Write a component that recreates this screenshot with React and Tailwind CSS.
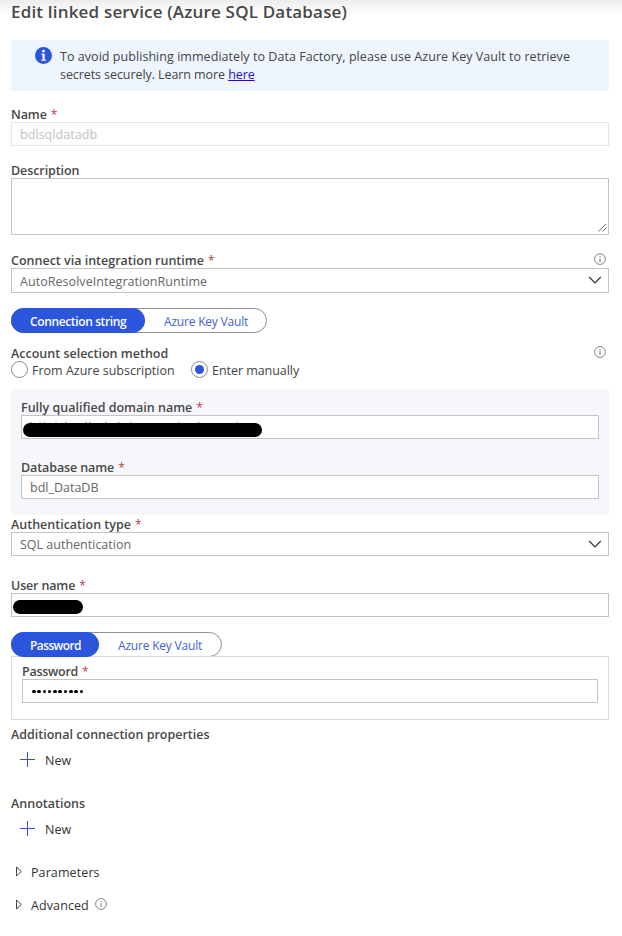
function InfoCircle({ className = "" }) {
  return (
    <svg viewBox="0 0 12 12" className={`size-3 shrink-0 ${className}`} fill="none" stroke="#666">
      <circle cx="6" cy="6" r="5.4" strokeWidth="0.8" />
      <path d="M6 5v4M6 3v1" strokeWidth="0.9" />
    </svg>
  );
}

function Chevron() {
  return (
    <svg viewBox="0 0 14 8" className="mb-[3px] h-2 w-3.5 shrink-0" fill="none" stroke="#333" strokeWidth="1.2">
      <path d="M1.2 1 7 6.8 12.8 1" />
    </svg>
  );
}

function Label({ children, required, info, className = "" }) {
  return (
    <div className="flex h-[17px] items-end justify-between">
      <div className="flex whitespace-nowrap text-[12.5px] leading-[15px] font-semibold text-[#484848]">
        <span className={className}>{children}</span>
        {required && <span className="ml-1 text-[12px] font-normal text-[#b5434b]">*</span>}
      </div>
      {info && <InfoCircle className="mr-[3px] mb-[3px]" />}
    </div>
  );
}

function Field({ children, className = "h-6 border-[#c4c4c6] text-[#666]" }) {
  return (
    <div className={`flex items-center border bg-white pt-0.5 pl-2 text-[12.5px] whitespace-nowrap ${className}`}>
      {children}
    </div>
  );
}

function Pills({ active, activeClass, widthClass }) {
  return (
    <div className={`flex h-[25px] rounded-full border border-[#8f8f98] text-[12px] leading-[23px] whitespace-nowrap ${widthClass}`}>
      <div className={`-my-px -ml-px h-[25px] rounded-full bg-[#2a55dc] pl-[19px] font-semibold text-white ${activeClass}`}>
        {active}
      </div>
      <div className="pl-[19px] leading-[25px] tracking-[-0.2px] text-[#3f62d8]">Azure Key Vault</div>
    </div>
  );
}

function AddNew() {
  return (
    <div className="flex h-[17px] items-center pl-[9px]">
      <svg viewBox="0 0 15 15" className="mb-0.5 size-[15px]" fill="none" stroke="#3555c5">
        <path d="M7.5 0v15M0 7.5h15" />
      </svg>
      <span className="ml-2.5 text-[12.5px] leading-[17px] text-[#333]">New</span>
    </div>
  );
}

function Expander({ children, info }) {
  return (
    <div className="flex h-[17px] items-center pl-[5px] text-[12.5px] leading-[17px] font-medium text-[#333]">
      <svg viewBox="0 0 6 11" className="mb-0.5 h-[11px] w-1.5" fill="none" stroke="#444">
        <path d="M.5 1v9L5.3 5.5Z" />
      </svg>
      <span className="ml-[9px] tracking-[0.1px]">{children}</span>
      {info && <InfoCircle className="-mt-1 ml-1.5" />}
    </div>
  );
}

export default function App() {
  return (
    <div className="h-[936px] w-[622px] overflow-hidden bg-linear-to-b from-[#ececec] to-white to-[14px] pr-[13px] pl-[11px] font-['Open_Sans','Noto_Sans',sans-serif]">
      <h1 className="h-10 text-[17px] leading-6 font-semibold tracking-[0.18px] whitespace-nowrap text-[#484848]">
        Edit linked service (Azure SQL Database)
      </h1>

      <div className="flex h-[51px] bg-[#eef5ff] pt-[7px] pl-6">
        <svg viewBox="0 0 17 17" className="size-[17px] shrink-0">
          <circle cx="8.5" cy="8.5" r="8.5" fill="#2a55dc" />
          <circle cx="8.5" cy="4.2" r="1.4" fill="#fff" />
          <path d="M6.5 6.8h3.2v5.9h1.3v1.1H6.2v-1.1h1.3V8h-1Z" fill="#fff" />
        </svg>
        <p className="mt-px ml-2 text-[12.5px] leading-[18px] whitespace-nowrap text-[#444]">
          <span className="tracking-[0.05px]">
            To avoid publishing immediately to Data Factory, please use Azure Key Vault to retrieve
          </span>
          <br />
          <span className="tracking-[-0.08px]">
            secrets securely. Learn more <a className="text-[#2a0dcb] underline">here</a>
          </span>
        </p>
      </div>

      <div className="mt-3.5">
        <Label required className="tracking-[-0.1px]">Name</Label>
        <Field className="h-6 border-[#e6e6e6] text-[#c2c2c2]">
          <span className="tracking-[0.05px]">bdlsqldatadb</span>
        </Field>
      </div>

      <div className="mt-[15px]">
        <Label className="tracking-[-0.08px]">Description</Label>
        <div className="flex h-[57px] items-end justify-end border border-[#c4c4c6] bg-white p-px">
          <svg viewBox="0 0 9 9" className="mb-px size-[9px]" stroke="#555" strokeWidth="0.9">
            <path d="M.5 8.5 8 1M4.5 8.5 8.3 4.7" />
          </svg>
        </div>
      </div>

      <div className="mt-4">
        <Label required info>Connect via integration runtime</Label>
        <Field className="h-[25px] justify-between border-[#c4c4c6] pr-1.5 text-[#666]">
          <span className="pt-px tracking-[0.05px]">AutoResolveIntegrationRuntime</span>
          <Chevron />
        </Field>
      </div>

      <div className="mt-[15px]">
        <Pills active="Connection string" activeClass="w-[134px] leading-[27px] tracking-[-0.37px]" widthClass="w-64" />
      </div>

      <div className="mt-[11px]">
        <Label info>Account selection method</Label>
      </div>
      <div className="flex h-[17px] items-center text-[12.5px] leading-[15px] whitespace-nowrap text-[#444]">
        <span className="size-[17px] rounded-full border border-[#888] bg-white" />
        <span className="mt-px ml-1 w-[142px]">From Azure subscription</span>
        <span className="ml-[17px] flex size-[17px] items-center justify-center rounded-full border border-[#888] bg-white">
          <span className="size-[9px] rounded-full bg-[#2a55dc]" />
        </span>
        <span className="mt-px ml-1 tracking-[-0.05px]">Enter manually</span>
      </div>

      <div className="mt-[11px] h-[126px] bg-[#f6f7fa] px-2.5 pt-[9px]">
        <Label required>Fully qualified domain name</Label>
        <div className="relative">
          <Field />
          <svg viewBox="0 0 240 18" className="absolute top-[6px] left-[2px] h-[18px] w-60" fill="none">
            <path d="M8 1v2M17 1v2M21 1v2M33 1v2M43 1v2M63 1v2M67 1v2M83 1v2M96 1v2M108 1v2M156 1v2M176 1v2M214 1v2" stroke="#777" />
            <rect y="2" width="239" height="14" rx="7" fill="#000" />
          </svg>
        </div>
        <div className="mt-[19px]">
          <Label required className="tracking-[-0.1px]">Database name</Label>
          <Field>bdl_DataDB</Field>
        </div>
      </div>

      <Label required>Authentication type</Label>
      <Field className="h-6 justify-between border-[#c4c4c6] pr-1.5 text-[#666]">
        <span className="pt-px">SQL authentication</span>
        <Chevron />
      </Field>

      <div className="mt-5">
        <Label required className="tracking-[-0.15px]">User name</Label>
        <div className="relative">
          <Field />
          <div className="absolute top-[7px] left-[2px] h-3.5 w-[70px] rounded-full bg-black" />
        </div>
      </div>

      <div className="mt-[15px]">
        <Pills active="Password" activeClass="w-[88px] leading-[27px] tracking-[-0.6px]" widthClass="w-[211px]" />
      </div>
      <div className="-mt-px h-16 border border-[#dadadc] px-2.5 pt-[5px]">
        <Label required className="tracking-[-0.25px]">Password</Label>
        <Field>
          <span className="-mt-px flex gap-[1.7px] pl-px">
            {Array.from({ length: 10 }, (_, i) => (
              <span key={i} className="size-[3.6px] rounded-full bg-black" />
            ))}
          </span>
        </Field>
      </div>

      <div className="mt-[5px]">
        <Label>Additional connection properties</Label>
      </div>
      <div className="mt-2.5">
        <AddNew />
      </div>
      <div className="mt-[25px]">
        <Label>Annotations</Label>
      </div>
      <div className="mt-2.5">
        <AddNew />
      </div>
      <div className="mt-[26px]">
        <Expander>Parameters</Expander>
      </div>
      <div className="mt-4">
        <Expander info>Advanced</Expander>
      </div>
    </div>
  );
}
